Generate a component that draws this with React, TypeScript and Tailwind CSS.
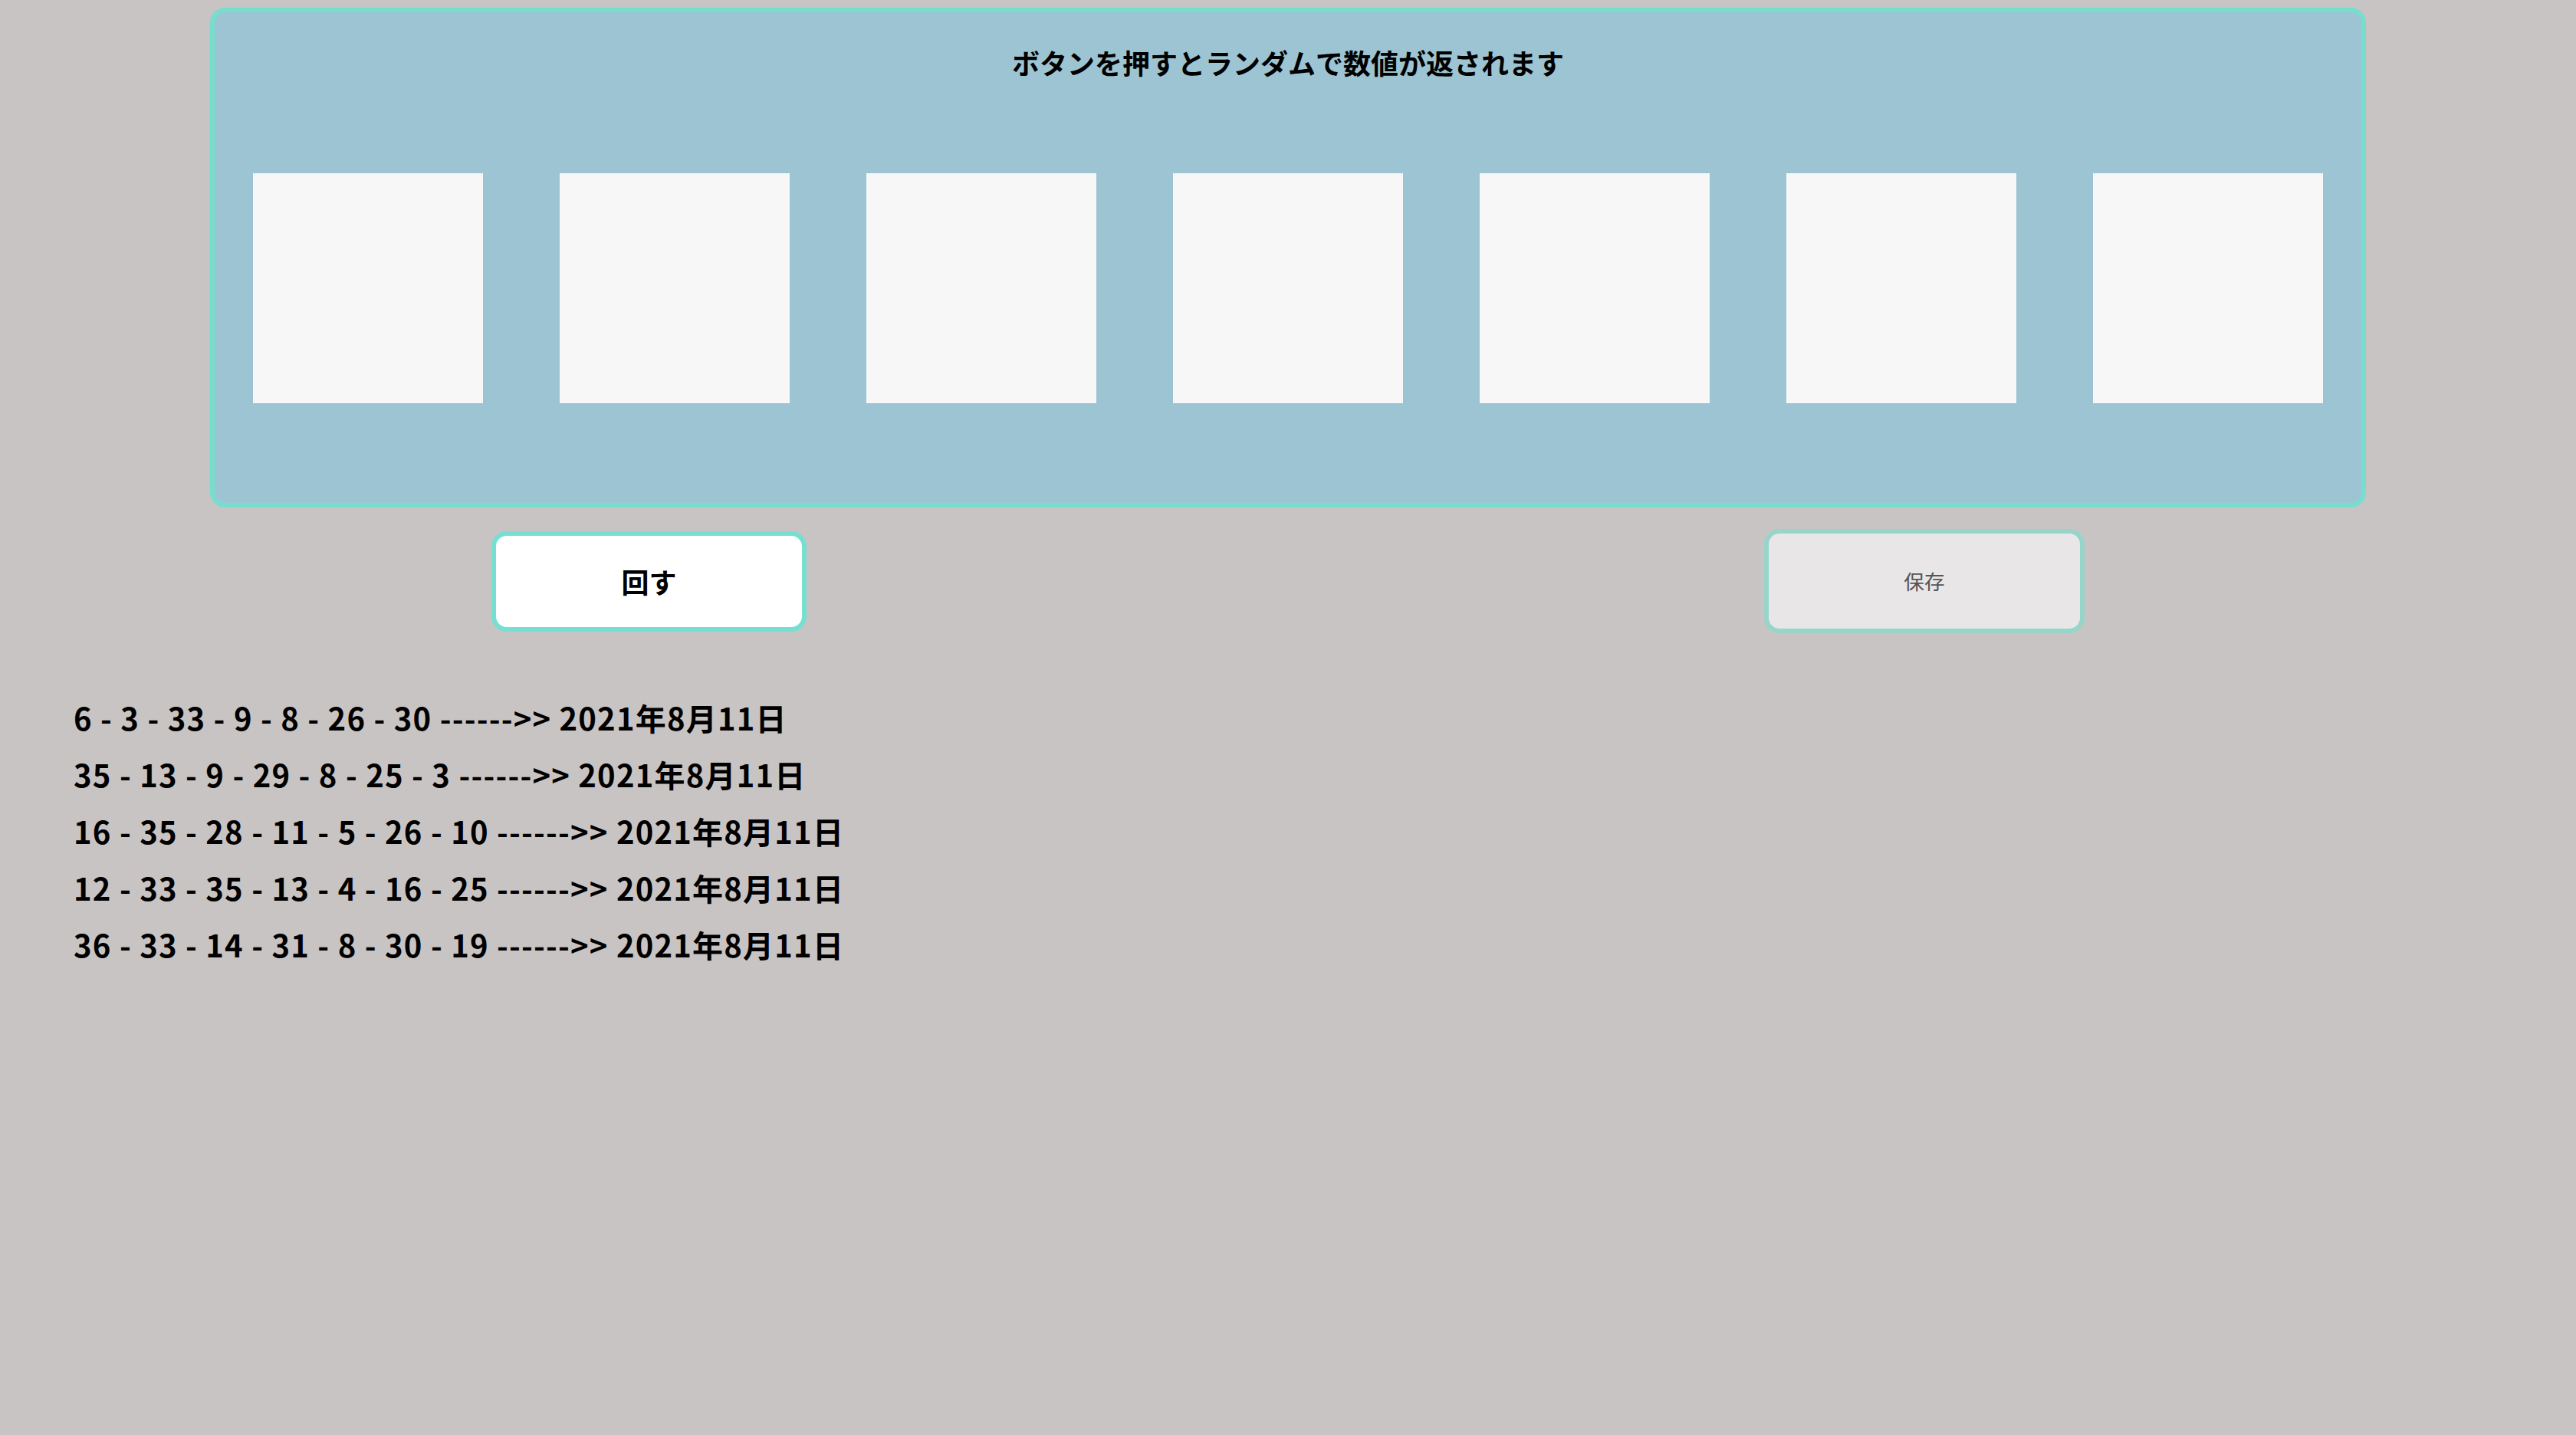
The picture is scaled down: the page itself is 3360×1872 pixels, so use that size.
import React from "react";

const rows = [
  "6 - 3 - 33 - 9 - 8 - 26 - 30 ------>> 2021年8月11日",
  "35 - 13 - 9 - 29 - 8 - 25 - 3 ------>> 2021年8月11日",
  "16 - 35 - 28 - 11 - 5 - 26 - 10 ------>> 2021年8月11日",
  "12 - 33 - 35 - 13 - 4 - 16 - 25 ------>> 2021年8月11日",
  "36 - 33 - 14 - 31 - 8 - 30 - 19 ------>> 2021年8月11日",
];

export default function App() {
  return (
    <div
      className="min-h-screen w-full bg-[#c9c4c4] pt-[10px] text-black"
      style={{ fontFamily: '"Noto Sans CJK JP", "Noto Sans", sans-serif' }}
    >
      <div className="ml-[274px] w-[2812px] h-[652px] rounded-[20px] border-[6px] border-[#76ddcf] bg-[#9dc4d2] pt-[41px]">
        <h1 className="text-center text-[36px] font-bold leading-[48px]">
          ボタンを押すとランダムで数値が返されます
        </h1>
        <div className="mt-[121px] flex justify-around">
          {Array.from({ length: 7 }).map((_, i) => (
            <div key={i} className="h-[300px] w-[300px] bg-[#f7f7f7]" />
          ))}
        </div>
      </div>

      <div className="mt-[28px] flex h-[136px] items-center pl-[641px]">
        <button className="h-[131px] w-[411px] rounded-[20px] border-[6px] border-[#76dfd1] bg-white text-[36px] font-bold leading-none text-black">
          回す
        </button>
        <button className="ml-[1249px] h-[136px] w-[418px] rounded-[20px] border-[6px] border-[#97d4c9] bg-[#e8e6e7] text-[26.67px] leading-none text-[#555555]">
          保存
        </button>
      </div>

      <div className="mt-[73px] pl-[96px]">
        {rows.map((r, i) => (
          <p key={i} className="text-[40px] font-bold leading-[74px] tracking-[1.2px]">
            {r}
          </p>
        ))}
      </div>
    </div>
  );
}
